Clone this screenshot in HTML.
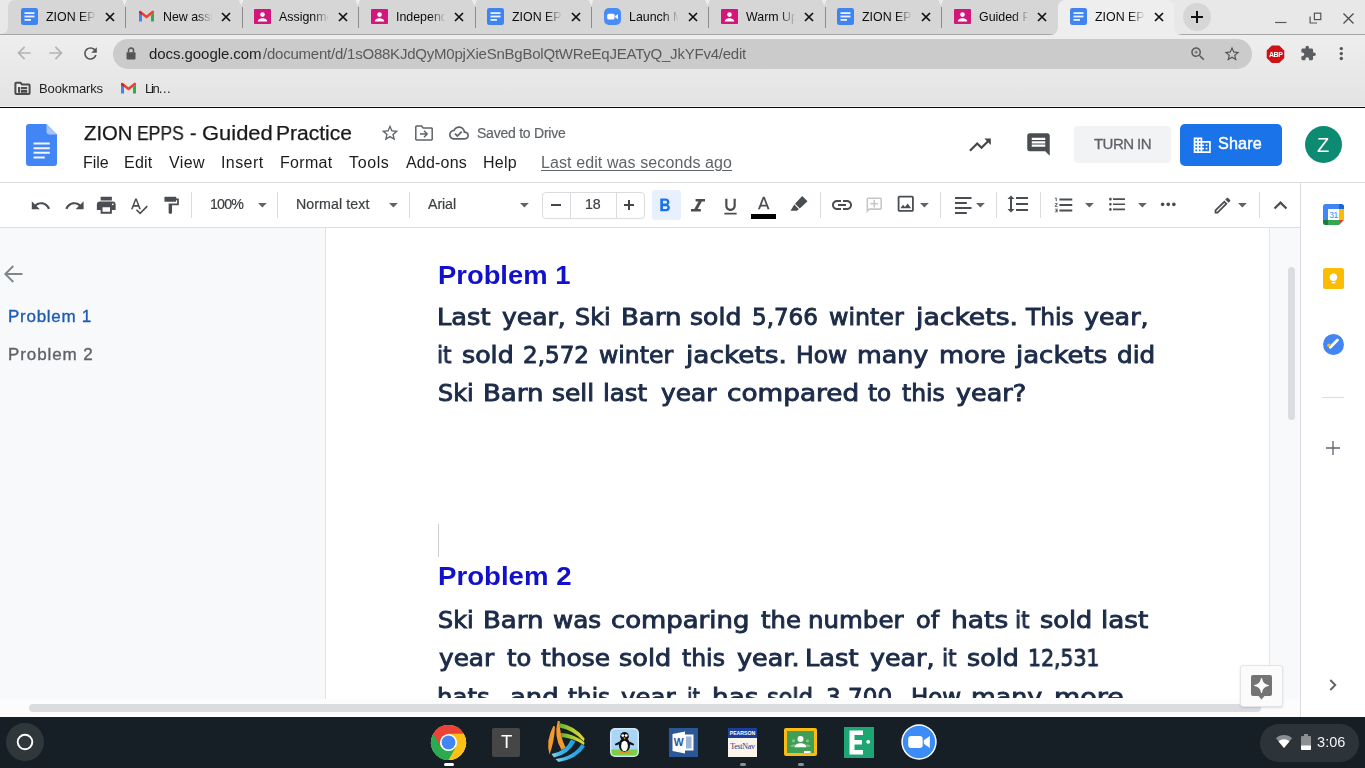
<!DOCTYPE html>
<html lang="en">
<head>
<meta charset="utf-8">
<title>ZION EPPS - Guided Practice - Google Docs</title>
<style>
*{box-sizing:border-box;margin:0;padding:0}
html,body{width:1365px;height:768px;overflow:hidden;background:#fff}
body{position:relative;font-family:"Liberation Sans",sans-serif;color:#202124}
.a{position:absolute}
.t{position:absolute;white-space:nowrap;line-height:1;transform-origin:0 0;will-change:transform}
svg{position:absolute;overflow:visible}
/* chrome frame */
#frame{left:0;top:0;width:1365px;height:35px;background:#e8e8e8}
#frameline{left:0;top:34px;width:1365px;height:1px;background:#a6a6a6}
.tab{top:0;height:34px;background:#d6d6d6;border-radius:8px 8px 0 0}
.tabsep{top:7px;width:1px;height:21px;background:#8c8c8c}
#atab{left:1058px;top:0;width:116px;height:35px;background:#ececec;border-radius:8px 8px 0 0}
.tt{font-size:12.400px;color:#0c0c0c}
.fade{top:6px;width:16px;height:22px}
#toolbar{left:0;top:35px;width:1365px;height:72px;background:linear-gradient(#eeeeee,#e9e9e9 45%,#e3e3e3)}
#omni{left:113px;top:39px;width:1139px;height:30px;border-radius:15px;background:#cbcbcb}
#pageline{left:0;top:106px;width:1365px;height:2px;background:linear-gradient(#f2f2f2 50%,#0a0a0a 50%)}
/* docs */
#dochead{left:0;top:108px;width:1365px;height:75px;background:#fff}
#headline{left:0;top:182px;width:1365px;height:1px;background:#dadce0}
#tbline{left:0;top:227px;width:1300px;height:1px;background:#dcdee1}
.menu{font-size:16px;color:#1b1c1e}
.sep{top:192px;width:1px;height:26px;background:#dadce0}
.tbt{font-size:14.200px;color:#3c4043;-webkit-text-stroke:0.200px #3c4043}
#outline{left:0;top:228px;width:325px;height:472px;background:#f8f9fa}
#outlineline{left:325px;top:228px;width:1px;height:472px;background:#e3e4e6}
#page{left:326px;top:228px;width:943px;height:471px;background:#fff}
#gutter{left:1269px;top:228px;width:31px;height:472px;background:#f8f9fa;border-left:1px solid #e6e7e9}
#vthumb{left:1288px;top:267px;width:7px;height:153px;border-radius:4px;background:#dadce0}
#side{left:1300px;top:183px;width:65px;height:534px;background:#fff;border-left:1px solid #dadce0}
#hscroll{left:0;top:699px;width:1300px;height:18px;background:#fcfcfc}
#hthumb{left:28.500px;top:704px;width:1232.500px;height:8px;border-radius:4px;background:#dadce0}
.h{font-family:"Liberation Sans",sans-serif;font-weight:bold;font-size:26.67px;color:#1111cc}
.p{font-family:"DejaVu Sans","Liberation Sans",sans-serif;font-size:23px;color:#1c2b48;-webkit-text-stroke:0.900px #1c2b48}
/* shelf */
#shelf{left:0;top:717px;width:1365px;height:51px;background:#171f26}
</style>
</head>
<body>
<svg width="0" height="0" style="left:0;top:0"><defs>
<g id="i-docs"><rect x="0" y="0" width="17" height="17" rx="2.2" fill="#4184f0"/><rect x="3.5" y="4.2" width="10" height="1.8" fill="#eaf2ff"/><rect x="3.5" y="7.6" width="10" height="1.8" fill="#eaf2ff"/><rect x="3.5" y="11" width="6.5" height="1.8" fill="#eaf2ff"/></g>
<g id="i-gmail"><path d="M1 3.2v10.3h3V7.3z" fill="#4285f4"/><path d="M16 3.2v10.3h-3V7.3z" fill="#34a853"/><path d="M13 3.6l3-.4v1.6l-3 2.5z" fill="#fbbc04"/><path d="M1 3.2l1.4-.6L8.5 7.2l6.1-4.6 1.4.6v1.6L8.5 10.6 1 4.8z" fill="#ea4335"/><path d="M1 3.2v1.6l3 2.5V4.4z" fill="#c5221f"/></g>
<g id="i-pink"><rect x="0" y="1" width="17" height="15" rx="1" fill="#d3167c"/><circle cx="8.5" cy="6.6" r="2.3" fill="#fff"/><path d="M3.8 13.6c0-2.4 2.6-3.3 4.7-3.3s4.7.9 4.7 3.3z" fill="#fff"/></g>
<g id="i-zoom"><rect x="0" y="0" width="17" height="17" rx="5" fill="#4a8cf7"/><rect x="3.2" y="5.7" width="7.4" height="5.8" rx="1.6" fill="#fff"/><path d="M11.2 8l2.8-2v5.2l-2.8-2z" fill="#fff"/></g>
</defs></svg>
<!-- ======== browser frame / tab strip ======== -->
<div class="a" id="frame"></div>
<svg style="left:0;top:0" width="1365" height="35" viewBox="0 0 1365 35"><path d="M0 34Q8 34 8 26.500V8Q8 0 16 0H1070V34z" fill="#d6d6d6"/><path d="M122.1 0l2.500 5.500 2.500-5.500zM238.7 0l2.500 5.500 2.500-5.500zM355.3 0l2.500 5.500 2.500-5.500zM471.9 0l2.500 5.500 2.500-5.500zM588.5 0l2.500 5.500 2.500-5.500zM705.1 0l2.500 5.500 2.500-5.500zM821.7 0l2.500 5.500 2.500-5.500zM938.3 0l2.500 5.500 2.500-5.500z" fill="#ececec"/></svg>
<div class="a" id="frameline"></div>
<svg style="left:0;top:0" width="1365" height="35" viewBox="0 0 1365 35"><path d="M1049.500 35Q1058 35 1058 26.500V8Q1058 0 1066 0H1166Q1174 0 1174 8V26.500Q1174 35 1182.500 35z" fill="#eeeeee"/></svg>
<svg style="left:21.0px;top:8px" width="17" height="17" viewBox="0 0 17 17"><use href="#i-docs"/></svg>
<div class="a" style="left:46.0px;top:6px;width:49px;height:22px;overflow:hidden"><span class="t tt" style="left:0px;top:4.50px;">ZION EPPS - Guided Practice</span></div>
<div class="a fade" style="left:80.0px;background:linear-gradient(90deg,#d6d6d600,#d6d6d6)"></div>
<svg style="left:104.5px;top:12px" width="10" height="10" viewBox="0 0 10 10"><path d="M1 1l8 8M9 1l-8 8" stroke="#111" stroke-width="1.7" fill="none"/></svg>
<svg style="left:137.6px;top:8px" width="17" height="17" viewBox="0 0 17 17"><use href="#i-gmail"/></svg>
<div class="a" style="left:162.6px;top:6px;width:49px;height:22px;overflow:hidden"><span class="t tt" style="left:0px;top:4.50px;">New assignment</span></div>
<div class="a fade" style="left:196.6px;background:linear-gradient(90deg,#d6d6d600,#d6d6d6)"></div>
<svg style="left:221.1px;top:12px" width="10" height="10" viewBox="0 0 10 10"><path d="M1 1l8 8M9 1l-8 8" stroke="#111" stroke-width="1.7" fill="none"/></svg>
<svg style="left:254.2px;top:8px" width="17" height="17" viewBox="0 0 17 17"><use href="#i-pink"/></svg>
<div class="a" style="left:279.2px;top:6px;width:49px;height:22px;overflow:hidden"><span class="t tt" style="left:0px;top:4.50px;">Assignments</span></div>
<div class="a fade" style="left:313.2px;background:linear-gradient(90deg,#d6d6d600,#d6d6d6)"></div>
<svg style="left:337.7px;top:12px" width="10" height="10" viewBox="0 0 10 10"><path d="M1 1l8 8M9 1l-8 8" stroke="#111" stroke-width="1.7" fill="none"/></svg>
<svg style="left:370.8px;top:8px" width="17" height="17" viewBox="0 0 17 17"><use href="#i-pink"/></svg>
<div class="a" style="left:395.8px;top:6px;width:49px;height:22px;overflow:hidden"><span class="t tt" style="left:0px;top:4.50px;">Independent Practice</span></div>
<div class="a fade" style="left:429.8px;background:linear-gradient(90deg,#d6d6d600,#d6d6d6)"></div>
<svg style="left:454.3px;top:12px" width="10" height="10" viewBox="0 0 10 10"><path d="M1 1l8 8M9 1l-8 8" stroke="#111" stroke-width="1.7" fill="none"/></svg>
<svg style="left:487.4px;top:8px" width="17" height="17" viewBox="0 0 17 17"><use href="#i-docs"/></svg>
<div class="a" style="left:512.4px;top:6px;width:49px;height:22px;overflow:hidden"><span class="t tt" style="left:0px;top:4.50px;">ZION EPPS - Warm Up</span></div>
<div class="a fade" style="left:546.4px;background:linear-gradient(90deg,#d6d6d600,#d6d6d6)"></div>
<svg style="left:570.9px;top:12px" width="10" height="10" viewBox="0 0 10 10"><path d="M1 1l8 8M9 1l-8 8" stroke="#111" stroke-width="1.7" fill="none"/></svg>
<svg style="left:604.0px;top:8px" width="17" height="17" viewBox="0 0 17 17"><use href="#i-zoom"/></svg>
<div class="a" style="left:629.0px;top:6px;width:49px;height:22px;overflow:hidden"><span class="t tt" style="left:0px;top:4.50px;">Launch Meeting - Zoom</span></div>
<div class="a fade" style="left:663.0px;background:linear-gradient(90deg,#d6d6d600,#d6d6d6)"></div>
<svg style="left:687.5px;top:12px" width="10" height="10" viewBox="0 0 10 10"><path d="M1 1l8 8M9 1l-8 8" stroke="#111" stroke-width="1.7" fill="none"/></svg>
<svg style="left:720.6px;top:8px" width="17" height="17" viewBox="0 0 17 17"><use href="#i-pink"/></svg>
<div class="a" style="left:745.6px;top:6px;width:49px;height:22px;overflow:hidden"><span class="t tt" style="left:0px;top:4.50px;">Warm Up</span></div>
<div class="a fade" style="left:779.6px;background:linear-gradient(90deg,#d6d6d600,#d6d6d6)"></div>
<svg style="left:804.1px;top:12px" width="10" height="10" viewBox="0 0 10 10"><path d="M1 1l8 8M9 1l-8 8" stroke="#111" stroke-width="1.7" fill="none"/></svg>
<svg style="left:837.2px;top:8px" width="17" height="17" viewBox="0 0 17 17"><use href="#i-docs"/></svg>
<div class="a" style="left:862.2px;top:6px;width:49px;height:22px;overflow:hidden"><span class="t tt" style="left:0px;top:4.50px;">ZION EPPS - Independent</span></div>
<div class="a fade" style="left:896.2px;background:linear-gradient(90deg,#d6d6d600,#d6d6d6)"></div>
<svg style="left:920.7px;top:12px" width="10" height="10" viewBox="0 0 10 10"><path d="M1 1l8 8M9 1l-8 8" stroke="#111" stroke-width="1.7" fill="none"/></svg>
<svg style="left:953.8px;top:8px" width="17" height="17" viewBox="0 0 17 17"><use href="#i-pink"/></svg>
<div class="a" style="left:978.8px;top:6px;width:49px;height:22px;overflow:hidden"><span class="t tt" style="left:0px;top:4.50px;">Guided Practice</span></div>
<div class="a fade" style="left:1012.8px;background:linear-gradient(90deg,#d6d6d600,#d6d6d6)"></div>
<svg style="left:1037.3px;top:12px" width="10" height="10" viewBox="0 0 10 10"><path d="M1 1l8 8M9 1l-8 8" stroke="#111" stroke-width="1.7" fill="none"/></svg>
<div class="a tabsep" style="left:125.0px"></div>
<div class="a tabsep" style="left:241.6px"></div>
<div class="a tabsep" style="left:358.2px"></div>
<div class="a tabsep" style="left:474.8px"></div>
<div class="a tabsep" style="left:591.4px"></div>
<div class="a tabsep" style="left:708.0px"></div>
<div class="a tabsep" style="left:824.6px"></div>
<div class="a tabsep" style="left:941.2px"></div>
<!-- ======== toolbar ======== -->
<div class="a" id="toolbar"></div>
<svg style="left:1070.4px;top:8px" width="17" height="17" viewBox="0 0 17 17"><use href="#i-docs"/></svg>
<div class="a" style="left:1095.4px;top:6px;width:49px;height:22px;overflow:hidden"><span class="t tt" style="left:0px;top:4.50px;">ZION EPPS - Guided Practice</span></div>
<div class="a fade" style="left:1129.4px;background:linear-gradient(90deg,#eeeeee00,#eeeeee)"></div>
<svg style="left:1153.9px;top:12px" width="10" height="10" viewBox="0 0 10 10"><path d="M1 1l8 8M9 1l-8 8" stroke="#111" stroke-width="1.7" fill="none"/></svg>
<div class="a" id="omni"></div>
<!-- new tab + window controls -->
<div class="a" style="left:1183px;top:3px;width:28px;height:28px;border-radius:14px;background:#d6d6d6"></div>
<svg style="left:1190px;top:10px" width="14" height="14" viewBox="0 0 14 14"><path d="M7 1v12M1 7h12" stroke="#111" stroke-width="2" fill="none"/></svg>
<svg style="left:1275px;top:21.200px" width="12" height="3" viewBox="0 0 12 3"><path d="M0 1.500h11.500" stroke="#5a5a5a" stroke-width="1.200"/></svg>
<svg style="left:1309px;top:12px" width="13" height="12" viewBox="0 0 13 12"><rect x="5.400" y="1.200" width="6.400" height="6.400" stroke="#555" stroke-width="1.200" fill="none"/><path d="M1.100 4.500V11h7" stroke="#555" stroke-width="1.200" fill="none"/></svg>
<svg style="left:1342.500px;top:12.800px" width="11" height="11" viewBox="0 0 11 11"><path d="M.5.500l10 10M10.500.500l-10 10" stroke="#4a4a4a" stroke-width="1.300" fill="none"/></svg>
<!-- nav buttons -->
<svg style="left:13.700px;top:43.300px" width="20" height="20" viewBox="0 0 24 24"><path d="M20 11H7.83l5.59-5.59L12 4l-8 8 8 8 1.41-1.41L7.83 13H20v-2z" fill="#b4b4b4"/></svg>
<svg style="left:46.400px;top:43.300px" width="20" height="20" viewBox="0 0 24 24"><path d="M12 4l-1.41 1.41L16.17 11H4v2h12.17l-5.58 5.59L12 20l8-8z" fill="#b4b4b4"/></svg>
<svg style="left:81px;top:44px" width="19" height="19" viewBox="0 0 24 24"><path d="M17.65 6.35C16.2 4.9 14.21 4 12 4c-4.42 0-7.99 3.58-7.99 8s3.57 8 7.99 8c3.73 0 6.84-2.55 7.73-6h-2.08c-.82 2.33-3.04 4-5.65 4-3.31 0-6-2.69-6-6s2.69-6 6-6c1.66 0 3.14.69 4.22 1.78L13 11h7V4l-2.35 2.35z" fill="#555"/></svg>
<svg style="left:126px;top:47px" width="10" height="13" viewBox="0 0 10 13"><path d="M2.5 5.5V3.6a2.5 2.5 0 015 0v1.9" stroke="#555" stroke-width="1.5" fill="none"/><rect x="0.5" y="5.2" width="9" height="7.3" rx="1" fill="#555"/></svg>
<span class="t" style="left:149.3px;top:45.90px;letter-spacing:-0.060px;font-size:15px;color:#1f1f1f">docs.google.com</span><span class="t" style="left:262.500px;top:45.90px;letter-spacing:-0.223px;font-size:15px;color:#5a5a5a">/document/d/1sO88KJdQyM0pjXieSnBgBolQtWReEqJEATyQ_JkYFv4/edit</span>
<svg style="left:1189px;top:45px" width="18" height="18" viewBox="0 0 24 24"><path d="M15.5 14h-.79l-.28-.27C15.41 12.59 16 11.11 16 9.5 16 5.91 13.09 3 9.5 3S3 5.91 3 9.5 5.91 16 9.5 16c1.61 0 3.09-.59 4.23-1.57l.27.28v.79l5 4.99L20.49 19l-4.99-5zm-6 0C7.01 14 5 11.99 5 9.5S7.01 5 9.5 5 14 7.01 14 9.5 11.99 14 9.5 14zm.5-7H9v2H7v1h2v2h1v-2h2V9h-2z" fill="#5c5c5c"/></svg>
<svg style="left:1223px;top:44.800px" width="18" height="18" viewBox="0 0 24 24"><path d="M22 9.24l-7.19-.62L12 2 9.19 8.63 2 9.24l5.46 4.73L5.82 21 12 17.27 18.18 21l-1.63-7.03L22 9.24zM12 15.4l-3.76 2.27 1-4.28-3.32-2.88 4.38-.38L12 6.1l1.71 4.04 4.38.38-3.32 2.88 1 4.28L12 15.4z" fill="#555"/></svg>
<svg style="left:1266px;top:45px" width="19" height="18.500" viewBox="0 0 20 20"><path d="M6 .5h8L19.5 6v8L14 19.500H6L.5 14V6z" fill="#cf1216"/><text x="10.200" y="12.900" text-anchor="middle" font-family="Liberation Sans,sans-serif" font-weight="bold" font-size="7.600" fill="#fff" letter-spacing="-0.500">ABP</text></svg>
<svg style="left:1299.600px;top:45px" width="16.500" height="16.500" viewBox="0 0 24 24"><path d="M20.500 11H19V7c0-1.100-.9-2-2-2h-4V3.500C13 2.120 11.880 1 10.500 1S8 2.120 8 3.500V5H4c-1.100 0-1.990.9-1.990 2v3.800H3.500c1.490 0 2.700 1.210 2.700 2.700s-1.210 2.700-2.700 2.700H2V20c0 1.100.9 2 2 2h3.800v-1.500c0-1.490 1.210-2.700 2.700-2.700 1.490 0 2.700 1.210 2.700 2.700V22H17c1.100 0 2-.9 2-2v-4h1.500c1.380 0 2.500-1.120 2.500-2.500S21.880 11 20.500 11z" fill="#5a5d62"/></svg>
<svg style="left:1339px;top:46px" width="5" height="15" viewBox="0 0 5 15"><circle cx="2.300" cy="2.600" r="1.700" fill="#555"/><circle cx="2.300" cy="7.600" r="1.700" fill="#555"/><circle cx="2.300" cy="12.500" r="1.700" fill="#555"/></svg>
<!-- bookmarks bar -->
<svg style="left:15px;top:82px" width="15" height="13" viewBox="0 0 15 13"><path d="M1.200.8h4.300l1.500 1.700h6.800a.8.800 0 01.8.8v8a.8.800 0 01-.8.8H1.200a.8.800 0 01-.8-.8V1.600a.8.800 0 01.8-.8z" fill="#ededed" stroke="#4d4d4d" stroke-width="2"/><path d="M3 5h2.200v5.800H3zM6 5h6.200v2H6zM6 7.800h6.200v3H6z" fill="#4d4d4d"/></svg>
<span class="t" style="left:39px;top:82.20px;letter-spacing:-0.115px;font-size:13px;color:#1f1f1f">Bookmarks</span>
<svg style="left:120px;top:80px" width="17" height="17" viewBox="0 0 17 17"><use href="#i-gmail"/></svg>
<span class="t" style="left:145px;top:82.20px;letter-spacing:-1.340px;font-size:13px;color:#1f1f1f">Lin…</span>

<div class="a" id="pageline"></div>
<!-- ======== docs header ======== -->
<div class="a" id="dochead"></div>
<!-- docs logo -->
<svg style="left:26px;top:124px" width="31" height="42" viewBox="0 0 31 42"><path d="M3 0h17.500L31 10.500V39a3 3 0 01-3 3H3a3 3 0 01-3-3V3a3 3 0 013-3z" fill="#4285f4"/><path d="M20.500 0L31 10.500h-7.500a3 3 0 01-3-3z" fill="#a4c4fb"/><path d="M7.500 18.600h16.300v2H7.500zM7.500 23.200h16.300v2H7.500zM7.500 27.800h16.300v2H7.500zM7.500 32.400h11.300v2H7.500z" fill="#f1f6ff"/></svg>
<span class="t" style="left:83.73px;top:122.67px;transform:scaleX(1.0133);font-size:20px;color:#1a1a1a;-webkit-text-stroke:0.250px #1a1a1a">ZION</span> <span class="t" style="left:136.53px;top:122.67px;transform:scaleX(0.8762);font-size:20px;color:#1a1a1a;-webkit-text-stroke:0.250px #1a1a1a">EPPS</span> <span class="t" style="left:190.42px;top:122.67px;transform:scaleX(0.9760);font-size:20px;color:#1a1a1a;-webkit-text-stroke:0.250px #1a1a1a">-</span> <span class="t" style="left:201.64px;top:122.67px;transform:scaleX(1.0971);font-size:20px;color:#1a1a1a;-webkit-text-stroke:0.250px #1a1a1a">Guided</span> <span class="t" style="left:276.48px;top:122.67px;transform:scaleX(1.0522);font-size:20px;color:#1a1a1a;-webkit-text-stroke:0.250px #1a1a1a">Practice</span>
<svg style="left:380px;top:123px" width="20" height="20" viewBox="0 0 24 24"><path d="M22 9.240l-7.190-.62L12 2 9.190 8.630 2 9.240l5.460 4.730L5.820 21 12 17.270 18.180 21l-1.630-7.030L22 9.240zM12 15.400l-3.760 2.270 1-4.280-3.320-2.880 4.380-.38L12 6.100l1.710 4.040 4.380.38-3.320 2.880 1 4.280L12 15.400z" fill="#5f6368"/></svg>
<svg style="left:415px;top:125px" width="18" height="16" viewBox="0 0 18 16"><path d="M1.500 1h5l1.700 2h8.300a.7.700 0 01.7.7v10.600a.7.700 0 01-.7.700H1.500a.7.700 0 01-.7-.7V1.700a.7.700 0 01.7-.7z" fill="none" stroke="#5f6368" stroke-width="1.500"/><path d="M5 8.200h5.400L8.500 6.300l1-1 3.700 3.700-3.700 3.700-1-1 1.900-1.900H5z" fill="#5f6368"/></svg>
<svg style="left:449px;top:123px" width="20" height="20" viewBox="0 0 24 24"><path d="M19.350 10.040C18.670 6.590 15.640 4 12 4 9.110 4 6.600 5.640 5.350 8.040 2.340 8.360 0 10.910 0 14c0 3.310 2.690 6 6 6h13c2.760 0 5-2.240 5-5 0-2.640-2.050-4.780-4.650-4.960zM19 18H6c-2.210 0-4-1.790-4-4s1.790-4 4-4h.71C7.370 7.690 9.480 6 12 6c3.040 0 5.500 2.460 5.500 5.500v.5H19c1.660 0 3 1.340 3 3s-1.340 3-3 3zm-9-3.820l-2.090-2.090L6.500 13.500 10 17l6.010-6.010-1.410-1.410z" fill="#5f6368"/></svg>
<span class="t" style="left:477px;top:126.15px;letter-spacing:-0.238px;font-size:14px;color:#5f6368;-webkit-text-stroke:0.200px #5f6368">Saved to Drive</span>
<!-- menus -->
<span class="t menu" style="left:82.800px;top:154.86px;letter-spacing:-0.020px;">File</span>
<span class="t menu" style="left:124px;top:154.86px;letter-spacing:0.230px;">Edit</span>
<span class="t menu" style="left:168.500px;top:154.86px;letter-spacing:0.402px;">View</span>
<span class="t menu" style="left:220.800px;top:154.86px;letter-spacing:0.414px;">Insert</span>
<span class="t menu" style="left:279.800px;top:154.86px;letter-spacing:0.305px;">Format</span>
<span class="t menu" style="left:348.500px;top:154.86px;letter-spacing:0.628px;">Tools</span>
<span class="t menu" style="left:405.800px;top:154.86px;letter-spacing:0.201px;">Add-ons</span>
<span class="t menu" style="left:483px;top:154.86px;letter-spacing:0.273px;">Help</span>
<span class="t menu" style="left:541.300px;top:154.86px;letter-spacing:0.098px;color:#5f6368;text-decoration:underline;text-underline-offset:2px">Last edit was seconds ago</span>
<!-- right side -->
<svg style="left:967px;top:132px" width="26" height="26" viewBox="0 0 24 24"><path d="M16 6l2.290 2.290-4.880 4.880-4-4L2 16.590 3.410 18l6-6 4 4 6.300-6.290L22 12V6z" fill="#444746"/></svg>
<svg style="left:1025px;top:131px" width="27" height="27" viewBox="0 0 24 24"><path d="M21.990 4c0-1.100-.89-2-1.990-2H4c-1.100 0-2 .9-2 2v12c0 1.100.9 2 2 2h14l4 4-.01-18zM18 14H6v-2h12v2zm0-3H6V9h12v2zm0-3H6V6h12v2z" fill="#4a4d51"/></svg>
<div class="a" style="left:1074px;top:126px;width:97px;height:37px;border-radius:4px;background:#f1f3f4"></div>
<span class="t" style="left:1094px;top:135.80px;letter-spacing:-0.547px;font-size:15px;color:#5f6368;-webkit-text-stroke:0.300px #5f6368">TURN IN</span>
<div class="a" style="left:1180px;top:124px;width:102px;height:42px;border-radius:5px;background:#1a73e8"></div>
<svg style="left:1192.300px;top:134.500px" width="20.500" height="20.500" viewBox="0 0 24 24"><path d="M12 7V3H2v18h20V7H12zM6 19H4v-2h2v2zm0-4H4v-2h2v2zm0-4H4V9h2v2zm0-4H4V5h2v2zm4 12H8v-2h2v2zm0-4H8v-2h2v2zm0-4H8V9h2v2zm0-4H8V5h2v2zm10 12h-8v-2h2v-2h-2v-2h2v-2h-2V9h8v10zm-2-8h-2v2h2v-2zm0 4h-2v2h2v-2z" fill="#fff"/></svg>
<span class="t" style="left:1218.300px;top:134.69px;letter-spacing:0.159px;font-size:16.200px;color:#fff;-webkit-text-stroke:0.450px #fff">Share</span>
<div class="a" style="left:1304.500px;top:126px;width:37px;height:37px;border-radius:50%;background:#0d8a72"></div>
<span class="t" style="left:1316.500px;top:135.37px;letter-spacing:1.281px;font-size:20px;color:#fff">Z</span>

<div class="a" id="headline"></div>
<svg style="left:30.2px;top:194.6px" width="21.4" height="21.4" viewBox="0 0 24 24"><path d="M12.500 8c-2.650 0-5.050.99-6.900 2.600L2 7v9h9l-3.620-3.620c1.390-1.160 3.160-1.880 5.120-1.880 3.540 0 6.550 2.310 7.600 5.500l2.370-.78C21.080 11.030 17.150 8 12.500 8z" fill="#4a4d51"/></svg>
<svg style="left:63.6px;top:194.6px" width="21.4" height="21.4" viewBox="0 0 24 24"><path d="M18.400 10.600C16.550 8.990 14.150 8 11.500 8c-4.650 0-8.580 3.030-9.960 7.220L3.900 16c1.050-3.190 4.050-5.500 7.600-5.500 1.950 0 3.730.72 5.120 1.880L13 16h9V7l-3.600 3.600z" fill="#4a4d51"/></svg>
<svg style="left:95.0px;top:194.1px" width="22.5" height="22.5" viewBox="0 0 24 24"><path d="M19 8H5c-1.660 0-3 1.340-3 3v6h4v4h12v-4h4v-6c0-1.660-1.340-3-3-3zm-3 11H8v-5h8v5zm3-7c-.55 0-1-.45-1-1s.45-1 1-1 1 .45 1 1-.45 1-1 1zm-1-9H6v4h12V3z" fill="#4a4d51"/></svg>
<svg style="left:128.6px;top:196.0px" width="19.7" height="19.7" viewBox="0 0 24 24"><path d="M12.450 16h2.090L9.430 3H7.570L2.460 16h2.090l1.120-3h5.640l1.140 3zm-6.020-5L8.500 5.480 10.570 11H6.430zm15.160.59l-8.090 8.090L9.830 16l-1.410 1.410 5.090 5.090L23 13l-1.410-1.410z" fill="#4a4d51"/></svg>
<svg style="left:160.6px;top:194.8px" width="20.4" height="20.4" viewBox="0 0 24 24"><path d="M18 4V3c0-.55-.45-1-1-1H5c-.55 0-1 .45-1 1v4c0 .55.45 1 1 1h12c.55 0 1-.45 1-1V6h1v4H9v11c0 .55.450 1 1 1h2c.55 0 1-.45 1-1v-9h8V4h-3z" fill="#4a4d51"/></svg>
<div class="a sep" style="left:191.4px"></div>
<span class="t tbt" style="left:210.300px;top:197.28px;letter-spacing:-0.824px;">100%</span>
<svg style="left:257.9px;top:203.1px" width="8.800" height="4.600" viewBox="0 0 10 5"><path d="M0 0h10L5 5z" fill="#5f6368"/></svg>
<div class="a sep" style="left:277.3px"></div>
<span class="t tbt" style="left:296.300px;top:197.28px;letter-spacing:0.088px;">Normal text</span>
<svg style="left:388.7px;top:203.1px" width="8.800" height="4.600" viewBox="0 0 10 5"><path d="M0 0h10L5 5z" fill="#5f6368"/></svg>
<div class="a sep" style="left:408.6px"></div>
<span class="t tbt" style="left:428.300px;top:197.28px;letter-spacing:-0.078px;">Arial</span>
<svg style="left:520.0px;top:203.1px" width="8.800" height="4.600" viewBox="0 0 10 5"><path d="M0 0h10L5 5z" fill="#5f6368"/></svg>
<div class="a" style="left:541.500px;top:191.500px;width:103px;height:27px;border:1px solid #dadce0;border-radius:4px"></div><div class="a" style="left:569.500px;top:192px;width:1px;height:26px;background:#dadce0"></div><div class="a" style="left:615.500px;top:192px;width:1px;height:26px;background:#dadce0"></div>
<svg style="left:550.500px;top:204px" width="10" height="2" viewBox="0 0 10 2"><path d="M0 1h10" stroke="#444746" stroke-width="2"/></svg>
<span class="t tbt" style="left:584.800px;top:197.48px;letter-spacing:-0.141px;">18</span>
<svg style="left:624px;top:200px" width="10" height="10" viewBox="0 0 10 10"><path d="M5 0v10M0 5h10" stroke="#444746" stroke-width="2"/></svg>
<div class="a" style="left:651.500px;top:190px;width:29px;height:30px;border-radius:3px;background:#e8f0fe"></div>
<svg style="left:653.5px;top:195.1px" width="21.5" height="21.5" viewBox="0 0 24 24"><path d="M15.600 10.790c.97-.67 1.650-1.770 1.650-2.790 0-2.260-1.750-4-4-4H7v14h7.040c2.090 0 3.710-1.700 3.710-3.790 0-1.520-.86-2.820-2.150-3.420zM10 6.500h3c.83 0 1.500.67 1.500 1.500s-.67 1.500-1.500 1.500h-3v-3zm3.500 9H10v-3h3.500c.83 0 1.500.67 1.500 1.500s-.67 1.500-1.500 1.500z" fill="#1a73e8"/></svg>
<svg style="left:691px;top:198.700px" width="14" height="12.500" viewBox="0 0 14 12.500"><path d="M4.600 0H14v2.600h-3.100L6.700 9.900h3.100v2.600H0V9.900h3.300L7.500 2.600H4.600z" fill="#4a4d51"/></svg>
<svg style="left:719.9px;top:196.0px" width="21.0" height="21.0" viewBox="0 0 24 24"><path d="M12 17c3.310 0 6-2.690 6-6V3h-2.500v8c0 1.930-1.570 3.500-3.500 3.500S8.500 12.930 8.500 11V3H6v8c0 3.310 2.690 6 6 6zm-7 2v2h14v-2H5z" fill="#4a4d51"/></svg>
<svg style="left:752.5px;top:194.0px" width="21.5" height="21.5" viewBox="0 0 24 24"><path d="M11 3L5.500 17h2.250l1.120-3h6.250l1.120 3h2.250L13 3h-2zm-1.380 9L12 5.670 14.380 12H9.620z" fill="#4a4d51"/></svg>
<div class="a" style="left:751px;top:214px;width:25px;height:4.500px;background:#000"></div>
<svg style="left:788.500px;top:194.500px" width="20" height="17" viewBox="0 0 20 17"><path d="M13.200 1l5.300 5.300-7.700 7.200-4.800-4.800zM5.300 9.600l4.600 4.600-2.200 1.600H1.500z" fill="#4a4d51"/></svg>
<div class="a sep" style="left:820.3px"></div>
<svg style="left:830.0px;top:193.2px" width="24.0" height="24.0" viewBox="0 0 24 24"><path d="M3.900 12c0-1.710 1.390-3.100 3.100-3.100h4V7H7c-2.760 0-5 2.240-5 5s2.240 5 5 5h4v-1.900H7c-1.710 0-3.100-1.390-3.100-3.100zM8 13h8v-2H8v2zm9-6h-4v1.900h4c1.710 0 3.100 1.390 3.100 3.100s-1.390 3.100-3.100 3.100h-4V17h4c2.760 0 5-2.240 5-5s-2.240-5-5-5z" fill="#4a4d51"/></svg>
<svg style="left:864.8px;top:195.8px" width="18.5" height="18.5" viewBox="0 0 24 24"><path d="M22 4c0-1.100-.9-2-2-2H4c-1.100 0-2 .9-2 2v12c0 1.100.9 2 2 2h14l4 4V4zm-2 13.170L18.830 16H4V4h16v13.170zM13 5h-2v4H7v2h4v4h2v-4h4V9h-4z" fill="#c4c7c5" transform="translate(24 0) scale(-1 1)"/></svg>
<svg style="left:894.5px;top:193.4px" width="21.5" height="21.5" viewBox="0 0 24 24"><path d="M19 5v14H5V5h14m0-2H5c-1.100 0-2 .9-2 2v14c0 1.100.9 2 2 2h14c1.100 0 2-.9 2-2V5c0-1.100-.9-2-2-2zm-4.860 8.860l-3 3.870L9 13.140 6 17h12l-3.860-5.140z" fill="#4a4d51"/></svg>
<svg style="left:920.2px;top:203.1px" width="8.800" height="4.600" viewBox="0 0 10 5"><path d="M0 0h10L5 5z" fill="#5f6368"/></svg>
<div class="a sep" style="left:940.3px"></div>
<svg style="left:954.700px;top:196.700px" width="16.500" height="17" viewBox="0 0 16.500 17"><path d="M0 0h16.500v2H0zM0 5h11.800v2H0zM0 10h16.500v2H0zM0 15h11.800v2H0z" fill="#4a4d51"/></svg>
<svg style="left:975.8px;top:203.1px" width="8.800" height="4.600" viewBox="0 0 10 5"><path d="M0 0h10L5 5z" fill="#5f6368"/></svg>
<div class="a sep" style="left:995.6px"></div>
<svg style="left:1006.0px;top:192.3px" width="24.0" height="24.0" viewBox="0 0 24 24"><path d="M6 7h2.500L5 3.500 1.500 7H4v10H1.500L5 20.500 8.500 17H6V7zm4-2v2h12V5H10zm0 14h12v-2H10v2zm0-6h12v-2H10v2z" fill="#4a4d51"/></svg>
<div class="a sep" style="left:1040.3px"></div>
<svg style="left:1053.0px;top:193.5px" width="22.0" height="22.0" viewBox="0 0 24 24"><path d="M2 17h2v.5H3v1h1v.5H2v1h3v-4H2v1zm1-9h1V4H2v1h1v3zm-1 3h1.800L2 13.100v.9h3v-1H3.200L5 10.900V10H2v1zm5-6v2h14V5H7zm0 14h14v-2H7v2zm0-6h14v-2H7v2z" fill="#4a4d51"/></svg>
<svg style="left:1084.5px;top:203.1px" width="8.800" height="4.600" viewBox="0 0 10 5"><path d="M0 0h10L5 5z" fill="#5f6368"/></svg>
<svg style="left:1106.7px;top:194.2px" width="20.5" height="20.5" viewBox="0 0 24 24"><path d="M4 10.500c-.83 0-1.500.67-1.500 1.500s.67 1.500 1.500 1.500 1.500-.67 1.500-1.500-.67-1.500-1.500-1.500zm0-6c-.83 0-1.500.67-1.500 1.500S3.170 7.500 4 7.500 5.500 6.830 5.500 6 4.830 4.500 4 4.500zm0 12c-.83 0-1.500.68-1.500 1.500s.68 1.500 1.500 1.500 1.500-.68 1.500-1.500-.67-1.500-1.500-1.500zM7 19h14v-2H7v2zm0-6h14v-2H7v2zm0-8v2h14V5H7z" fill="#4a4d51"/></svg>
<svg style="left:1137.6px;top:203.1px" width="8.800" height="4.600" viewBox="0 0 10 5"><path d="M0 0h10L5 5z" fill="#5f6368"/></svg>
<svg style="left:1156.8px;top:193.2px" width="22.5" height="22.5" viewBox="0 0 24 24"><path d="M6 10c-1.100 0-2 .9-2 2s.9 2 2 2 2-.9 2-2-.9-2-2-2zm12 0c-1.100 0-2 .9-2 2s.9 2 2 2 2-.9 2-2-.9-2-2-2zm-6 0c-1.100 0-2 .9-2 2s.9 2 2 2 2-.9 2-2-.9-2-2-2z" fill="#4a4d51"/></svg>
<svg style="left:1211.7px;top:194.5px" width="21.0" height="21.0" viewBox="0 0 24 24"><path d="M14.060 9.020l.92.92L5.920 19H5v-.92l9.060-9.060M17.660 3c-.25 0-.51.100-.7.290l-1.830 1.830 3.750 3.750 1.830-1.830c.39-.39.39-1.020 0-1.410l-2.340-2.340c-.2-.2-.45-.29-.71-.29zm-3.600 3.190L3 17.250V21h3.750L17.810 9.940l-3.750-3.750z" fill="#4a4d51"/></svg>
<svg style="left:1238.4px;top:203.1px" width="8.800" height="4.600" viewBox="0 0 10 5"><path d="M0 0h10L5 5z" fill="#5f6368"/></svg>
<div class="a sep" style="left:1258.5px"></div>
<svg style="left:1266.7px;top:192.1px" width="27.0" height="27.0" viewBox="0 0 24 24"><path d="M12 8l-6 6 1.410 1.410L12 10.830l4.590 4.580L18 14z" fill="#4a4d51"/></svg>

<div class="a" id="tbline"></div>
<!-- ======== document ======== -->
<div class="a" id="outline"></div>
<div class="a" id="outlineline"></div>
<div class="a" id="page"></div>
<!-- outline -->
<svg style="left:4px;top:264.500px" width="19" height="18" viewBox="0 0 19 18"><path d="M18.500 9H1.500M9.300 1L1.300 9l8 8" fill="none" stroke="#80868b" stroke-width="1.900"/></svg>
<span class="t" style="left:8.300px;top:308.41px;letter-spacing:0.724px;font-size:17px;color:#1f5bb5;-webkit-text-stroke:0.35px #1f5bb5">Problem 1</span>
<span class="t" style="left:8.300px;top:345.61px;letter-spacing:0.891px;font-size:17px;color:#5f6368;-webkit-text-stroke:0.35px #5f6368">Problem 2</span>
<!-- document text -->
<div class="a" style="left:326px;top:228px;width:943px;height:470px;overflow:hidden">
<span class="t h" style="left:111.77px;top:34.12px;transform:scaleX(1.0269);">Problem 1</span>
<span class="t p" style="left:111.07px;top:78.43px;transform:scaleX(1.1156);">Last</span> <span class="t p" style="left:176.19px;top:78.43px;transform:scaleX(1.0874);">year,</span> <span class="t p" style="left:249.13px;top:78.43px;transform:scaleX(1.0360);">Ski</span> <span class="t p" style="left:294.75px;top:78.43px;transform:scaleX(1.1313);">Barn</span> <span class="t p" style="left:364.10px;top:78.43px;transform:scaleX(1.0916);">sold</span> <span class="t p" style="left:425.65px;top:78.43px;transform:scaleX(0.9937);">5,766</span> <span class="t p" style="left:502.86px;top:78.43px;transform:scaleX(1.0319);">winter</span> <span class="t p" style="left:589.68px;top:78.43px;transform:scaleX(1.1587);">jackets.</span> <span class="t p" style="left:699.87px;top:78.43px;transform:scaleX(1.0163);">This</span> <span class="t p" style="left:758.30px;top:78.43px;transform:scaleX(1.1029);">year,</span>
<span class="t p" style="left:111.37px;top:116.43px;transform:scaleX(0.9237);">it</span> <span class="t p" style="left:136.00px;top:116.43px;transform:scaleX(1.0983);">sold</span> <span class="t p" style="left:197.05px;top:116.43px;transform:scaleX(1.0014);">2,572</span> <span class="t p" style="left:272.86px;top:116.43px;transform:scaleX(1.0251);">winter</span> <span class="t p" style="left:359.66px;top:116.43px;transform:scaleX(1.1439);">jackets.</span> <span class="t p" style="left:470.11px;top:116.43px;transform:scaleX(1.0235);">How</span> <span class="t p" style="left:531.49px;top:116.43px;transform:scaleX(1.1036);">many</span> <span class="t p" style="left:612.96px;top:116.43px;transform:scaleX(1.1199);">more</span> <span class="t p" style="left:689.94px;top:116.43px;transform:scaleX(1.1285);">jackets</span> <span class="t p" style="left:790.61px;top:116.43px;transform:scaleX(1.0711);">did</span>
<span class="t p" style="left:112.23px;top:154.43px;transform:scaleX(1.0360);">Ski</span> <span class="t p" style="left:157.05px;top:154.43px;transform:scaleX(1.1313);">Barn</span> <span class="t p" style="left:226.40px;top:154.43px;transform:scaleX(1.0849);">sell</span> <span class="t p" style="left:277.46px;top:154.43px;transform:scaleX(1.0603);">last</span> <span class="t p" style="left:334.99px;top:154.43px;transform:scaleX(1.0786);">year</span> <span class="t p" style="left:400.97px;top:154.43px;transform:scaleX(1.1439);">compared</span> <span class="t p" style="left:542.15px;top:154.43px;transform:scaleX(1.0036);">to</span> <span class="t p" style="left:576.46px;top:154.43px;transform:scaleX(1.0194);">this</span> <span class="t p" style="left:629.90px;top:154.43px;transform:scaleX(1.1058);">year?</span>
<div class="a" style="left:112px;top:296px;width:1px;height:33px;background:#c9ccd1"></div>
<span class="t h" style="left:111.76px;top:335.32px;transform:scaleX(1.0365);">Problem 2</span>
<span class="t p" style="left:112.23px;top:380.63px;transform:scaleX(1.0360);">Ski</span> <span class="t p" style="left:157.05px;top:380.63px;transform:scaleX(1.1313);">Barn</span> <span class="t p" style="left:227.48px;top:380.63px;transform:scaleX(1.0735);">was</span> <span class="t p" style="left:285.18px;top:380.63px;transform:scaleX(1.1260);">comparing</span> <span class="t p" style="left:434.68px;top:380.63px;transform:scaleX(1.0561);">the</span> <span class="t p" style="left:482.05px;top:380.63px;transform:scaleX(1.0638);">number</span> <span class="t p" style="left:590.13px;top:380.63px;transform:scaleX(1.0448);">of</span> <span class="t p" style="left:625.02px;top:380.63px;transform:scaleX(1.1515);">hats</span> <span class="t p" style="left:689.45px;top:380.63px;transform:scaleX(0.9377);">it</span> <span class="t p" style="left:714.39px;top:380.63px;transform:scaleX(1.1093);">sold</span> <span class="t p" style="left:774.73px;top:380.63px;transform:scaleX(1.1395);">last</span>
<span class="t p" style="left:113.28px;top:419.33px;transform:scaleX(1.0748);">year</span> <span class="t p" style="left:180.67px;top:419.33px;transform:scaleX(1.0516);">to</span> <span class="t p" style="left:215.49px;top:419.33px;transform:scaleX(1.0810);">those</span> <span class="t p" style="left:293.19px;top:419.33px;transform:scaleX(1.1093);">sold</span> <span class="t p" style="left:355.76px;top:419.33px;transform:scaleX(1.0218);">this</span> <span class="t p" style="left:410.60px;top:419.33px;transform:scaleX(1.1052);">year.</span> <span class="t p" style="left:479.27px;top:419.33px;transform:scaleX(1.1156);">Last</span> <span class="t p" style="left:544.40px;top:419.33px;transform:scaleX(1.1011);">year,</span> <span class="t p" style="left:615.95px;top:419.33px;transform:scaleX(0.9377);">it</span> <span class="t p" style="left:640.89px;top:419.33px;transform:scaleX(1.1027);">sold</span> <span class="t p" style="left:702.42px;top:419.33px;transform:scaleX(0.8875);">12,531</span>
<span class="t p" style="left:111.15px;top:457.53px;transform:scaleX(1.0628);">hats,</span> <span class="t p" style="left:183.58px;top:457.53px;transform:scaleX(1.1258);">and</span> <span class="t p" style="left:242.15px;top:457.53px;transform:scaleX(1.0027);">this</span> <span class="t p" style="left:294.88px;top:457.53px;transform:scaleX(1.0634);">year</span> <span class="t p" style="left:360.70px;top:457.53px;transform:scaleX(0.8397);">it</span> <span class="t p" style="left:385.63px;top:457.53px;transform:scaleX(1.1433);">has</span> <span class="t p" style="left:440.86px;top:457.53px;transform:scaleX(0.9748);">sold</span> <span class="t p" style="left:500.45px;top:457.53px;transform:scaleX(1.0036);">3,700.</span> <span class="t p" style="left:585.05px;top:457.53px;transform:scaleX(0.9986);">How</span> <span class="t p" style="left:645.09px;top:457.53px;transform:scaleX(1.1036);">many</span> <span class="t p" style="left:727.89px;top:457.53px;transform:scaleX(1.1705);">more</span>
</div>

<div class="a" id="gutter"></div>
<div class="a" id="vthumb"></div>
<div class="a" id="hscroll"></div>
<div class="a" id="hthumb"></div>
<div class="a" id="side"></div>
<!-- explore button -->
<div class="a" style="left:1239.500px;top:665px;width:43px;height:42px;border-radius:3px;background:#fbfbfb;border:1px solid #e4e5e7;box-shadow:0 1px 2px rgba(60,64,67,.18)"></div>
<svg style="left:1250.500px;top:675px" width="21" height="26" viewBox="0 0 21 26"><path d="M2 0h17a2 2 0 012 2v17a2 2 0 01-2 2h-5.500L10.500 24.500 7.500 21H2a2 2 0 01-2-2V2a2 2 0 012-2z" fill="#747474"/><path d="M10.500 3.600Q11.300 9.700 17.400 10.500 11.300 11.300 10.500 17.400 9.700 11.300 3.600 10.500 9.700 9.700 10.500 3.600z" fill="#fff" stroke="#fff" stroke-width="1.200" stroke-linejoin="round"/></svg>
<!-- side panel icons -->
<svg style="left:1322.500px;top:203.500px" width="21" height="21" viewBox="0 0 21 21"><path d="M2.500 0H16v5H5v11H0V2.500A2.500 2.500 0 012.500 0z" fill="#4285f4"/><path d="M16 0h2.500A2.500 2.500 0 0121 2.500V5h-5z" fill="#1967d2"/><path d="M16 5h5v11h-5z" fill="#fbbc04"/><path d="M0 16h5v5H2.500A2.500 2.500 0 010 18.500z" fill="#188038"/><path d="M5 16h11v5H5z" fill="#34a853"/><path d="M16 16h5l-5 5z" fill="#ea4335"/><rect x="5" y="5" width="11" height="11" fill="#fff"/><text x="10.500" y="13.700" text-anchor="middle" font-family="Liberation Sans,sans-serif" font-size="8.500" fill="#4285f4" letter-spacing="-0.500">31</text></svg>
<svg style="left:1322.500px;top:268px" width="21" height="21" viewBox="0 0 21 21"><rect width="21" height="21" rx="2.500" fill="#fbbc04"/><circle cx="10.500" cy="9.300" r="3.700" fill="#fff"/><rect x="8.700" y="13.800" width="3.600" height="1.500" fill="#fff"/></svg>
<svg style="left:1322.500px;top:333.500px" width="21" height="21" viewBox="0 0 21 21"><circle cx="10.500" cy="10.500" r="10.500" fill="#4285f4"/><path d="M7.300 13.200l7.200-7.200" stroke="#fff" stroke-width="2.800" stroke-linecap="round"/><circle cx="5.900" cy="11.300" r="1.700" fill="#fbbc04"/></svg>
<div class="a" style="left:1322px;top:397px;width:22px;height:1px;background:#dadce0"></div>
<svg style="left:1326px;top:441px" width="14" height="14" viewBox="0 0 14 14"><path d="M7 0v14M0 7h14" stroke="#5f6368" stroke-width="1.300"/></svg>
<svg style="left:1328.500px;top:678.500px" width="8" height="12" viewBox="0 0 8 12"><path d="M1.300 1l5 5-5 5" fill="none" stroke="#5f6368" stroke-width="1.900"/></svg>

<!-- ======== shelf ======== -->
<div class="a" id="shelf"></div>
<div class="a" style="left:6px;top:723px;width:38px;height:38px;border-radius:50%;background:#30373b"></div>
<svg style="left:16px;top:733px" width="18" height="18" viewBox="0 0 18 18"><circle cx="9" cy="9" r="7.300" fill="none" stroke="#fff" stroke-width="1.900"/></svg>
<div class="a" style="left:1260px;top:723.500px;width:99px;height:38.500px;border-radius:20px;background:#2d3439"></div>
<svg style="left:1275.500px;top:735px" width="16" height="13" viewBox="0 0 16 13"><path d="M8 13L0 3.200C2.200 1.200 5 0 8 0s5.800 1.200 8 3.200z" fill="#8a8f93"/><path d="M8 13L2.600 6.400C4.100 5.100 6 4.300 8 4.300s3.900.8 5.400 2.100z" fill="#fff"/></svg>
<svg style="left:1300.500px;top:734px" width="10" height="16" viewBox="0 0 10 16"><path d="M3 0h4v2h2a1 1 0 011 1v12a1 1 0 01-1 1H1a1 1 0 01-1-1V3a1 1 0 011-1h2z" fill="#8a8f93"/><path d="M0 11.500h10V15a1 1 0 01-1 1H1a1 1 0 01-1-1z" fill="#fff"/></svg>
<span class="t" style="left:1317px;top:734.53px;letter-spacing:0.066px;font-size:14.500px;color:#f1f3f4">3:06</span>
<!-- chrome -->
<svg style="left:430.500px;top:724.500px" width="35" height="35" viewBox="-17.500 -17.500 35 35"><circle r="17.500" fill="#fff"/><path d="M0 0L-15.160-8.750A17.500 17.500 0 0115.160-8.750z" fill="#ea4335"/><path d="M0 0L15.160-8.750A17.500 17.500 0 010 17.500z" fill="#fbc116"/><path d="M0 0L0 17.500A17.500 17.500 0 01-15.160-8.750z" fill="#2da94f"/><path d="M-15.160-8.750A17.500 17.500 0 0115.160-8.750L0-8.750z" fill="#ea4335"/><path d="M15.160-8.750A17.500 17.500 0 010 17.500L7.580 4.370z" fill="#fbc116"/><path d="M0 17.500A17.500 17.500 0 01-15.160-8.750L-7.580 4.370z" fill="#2da94f"/><path d="M0-8.750h15.160L7.580 4.370z" fill="#fbc116"/><path d="M7.580 4.370L0 17.500l-7.580-13.130z" fill="#2da94f"/><path d="M-7.580 4.370L-15.160-8.750H0z" fill="#ea4335"/><circle r="8.600" fill="#fff"/><circle r="6.900" fill="#4285f4"/></svg>
<div class="a" style="left:443.500px;top:763px;width:10.500px;height:2.500px;border-radius:1.500px;background:#fff"></div>
<!-- T -->
<div class="a" style="left:492px;top:728px;width:28px;height:29px;border-radius:2px;background:#464646"></div>
<span class="t" style="left:501.300px;top:733.34px;font-size:18.500px;color:#fff">T</span>
<!-- swoosh -->
<svg style="left:546.500px;top:721px" width="38" height="41" viewBox="0 0 38 41"><defs><linearGradient id="gy" x1="0" y1="0" x2="1" y2="0"><stop offset="0" stop-color="#5cb531"/><stop offset=".55" stop-color="#b4cf2f"/><stop offset="1" stop-color="#e2d935"/></linearGradient><linearGradient id="bl" x1="1" y1="0" x2="0" y2="0"><stop offset="0" stop-color="#1d9ddb"/><stop offset=".6" stop-color="#36b4ee"/><stop offset="1" stop-color="#8fd4ee"/></linearGradient></defs><path d="M6.300 5Q-1.500 20 2.500 33.500Q7.500 20 8 5.500z" fill="#f29a2e"/><path d="M10.700 0Q6.500 16 14.500 29L18.500 26.500Q12.500 14 12.700 0z" fill="#f4992b"/><path d="M12 2Q28 4.500 37.500 17.500L37 20.500Q26 9 12.500 6.500z" fill="url(#gy)"/><path d="M14 12Q27 12.500 37.500 21.500L37 24Q26 17 14.500 16z" fill="url(#gy)"/><path d="M24 18.500Q19 30.500 4.500 33L7 36.500Q22 33.500 28.500 20.500z" fill="url(#bl)"/><path d="M34.500 23Q27 35.500 8.500 38L11.500 41Q30 38 38 25.500z" fill="url(#bl)"/></svg>
<!-- penguin -->
<svg style="left:610px;top:728px" width="29" height="29" viewBox="0 0 29 29"><rect width="29" height="29" rx="5" fill="#d3e9f8"/><rect x="1.500" y="1.500" width="26" height="26" rx="3.500" fill="#a9d6f7"/><path d="M1.500 21.500h26V24a3.500 3.500 0 01-3.500 3.500H5A3.500 3.500 0 011.500 24z" fill="#7ccf45"/><ellipse cx="14.500" cy="17" rx="5.600" ry="7.200" fill="#111"/><circle cx="14.500" cy="8.300" r="4.300" fill="#111"/><path d="M9.500 13.500L4.800 16l.8 1.500 4.700-1.500zM19.500 13.500l4.700 2.500-.8 1.500-4.700-1.500z" fill="#111"/><ellipse cx="14.500" cy="18" rx="3.400" ry="5.300" fill="#fff"/><circle cx="12.800" cy="7.600" r="1.400" fill="#fff"/><circle cx="16.200" cy="7.600" r="1.400" fill="#fff"/><path d="M13.200 9.600h2.600l-1.300 2z" fill="#f28c1c"/><ellipse cx="11.500" cy="24.300" rx="2.800" ry="1.100" fill="#f28c1c"/><ellipse cx="17.500" cy="24.300" rx="2.800" ry="1.100" fill="#f28c1c"/></svg>
<!-- word -->
<svg style="left:668.500px;top:728px" width="29" height="29" viewBox="0 0 29 29"><rect width="29" height="29" fill="#2b5797"/><rect x="14" y="6.500" width="10.500" height="16" fill="#fff"/><rect x="17" y="8.500" width="5.500" height="12" fill="#9db4d6"/><path d="M3.500 6L16 3.500v22L3.500 23z" fill="#fff"/><text x="9.700" y="18.300" text-anchor="middle" font-family="Liberation Sans,sans-serif" font-weight="bold" font-size="10.500" fill="#2b5797">W</text></svg>
<!-- pearson -->
<svg style="left:727.500px;top:728px" width="29" height="29" viewBox="0 0 29 29"><rect width="29" height="29" fill="#fbf4ea"/><rect width="29" height="10" fill="#1b3f98"/><text x="14.500" y="7.400" text-anchor="middle" font-family="Liberation Sans,sans-serif" font-weight="bold" font-size="5.200" fill="#fff">PEARSON</text><text x="14.500" y="21.300" text-anchor="middle" font-family="Liberation Serif,serif" font-size="8" fill="#28388f" letter-spacing="-0.300">TestNav</text></svg>
<div class="a" style="left:739.500px;top:763px;width:6px;height:2.500px;border-radius:1.500px;background:#8b9095"></div>
<!-- classroom -->
<svg style="left:783.500px;top:728px" width="33" height="28" viewBox="0 0 33 28"><rect width="33" height="28" rx="2" fill="#f9bc15"/><rect x="3" y="3" width="27" height="22" fill="#3f9f52"/><circle cx="16.500" cy="11" r="3" fill="#fff"/><path d="M10.500 19.300c0-2.700 3.200-4 6-4s6 1.300 6 4z" fill="#fff"/><circle cx="9.500" cy="12.800" r="1.600" fill="#7ec58a"/><circle cx="23.500" cy="12.800" r="1.600" fill="#7ec58a"/><path d="M6.500 18.800c0-1.500 1.600-2.300 3-2.300.6 0 1.200.1 1.700.4-.8.600-1.300 1.300-1.300 1.900zM26.500 18.800c0-1.500-1.600-2.300-3-2.300-.6 0-1.200.1-1.700.4.8.6 1.300 1.300 1.300 1.900z" fill="#7ec58a"/><rect x="20" y="23" width="6.500" height="2" fill="#fff"/></svg>
<div class="a" style="left:797.500px;top:763px;width:6px;height:2.500px;border-radius:1.500px;background:#8b9095"></div>
<!-- E -->
<svg style="left:844px;top:726.500px" width="30" height="31" viewBox="0 0 30 31"><rect width="30" height="31" fill="#1ea672"/><path d="M5.500 3.500h13.500v4.500h-8.500v5h7.500v4.500h-7.500v5.500h8.500v4.500H5.500z" fill="#fff"/><circle cx="24.200" cy="14.800" r="1.900" fill="#fff"/></svg>
<!-- zoom -->
<svg style="left:900.500px;top:724px" width="36" height="36" viewBox="-18 -18 36 36"><circle r="17.700" fill="#fff"/><circle r="16.200" fill="#3b8cf7"/><rect x="-10.800" y="-6" width="14.500" height="12" rx="3" fill="#fff"/><path d="M4.800-1.800L10.800-6V6L4.800 1.800z" fill="#fff"/></svg>


</body>
</html>
